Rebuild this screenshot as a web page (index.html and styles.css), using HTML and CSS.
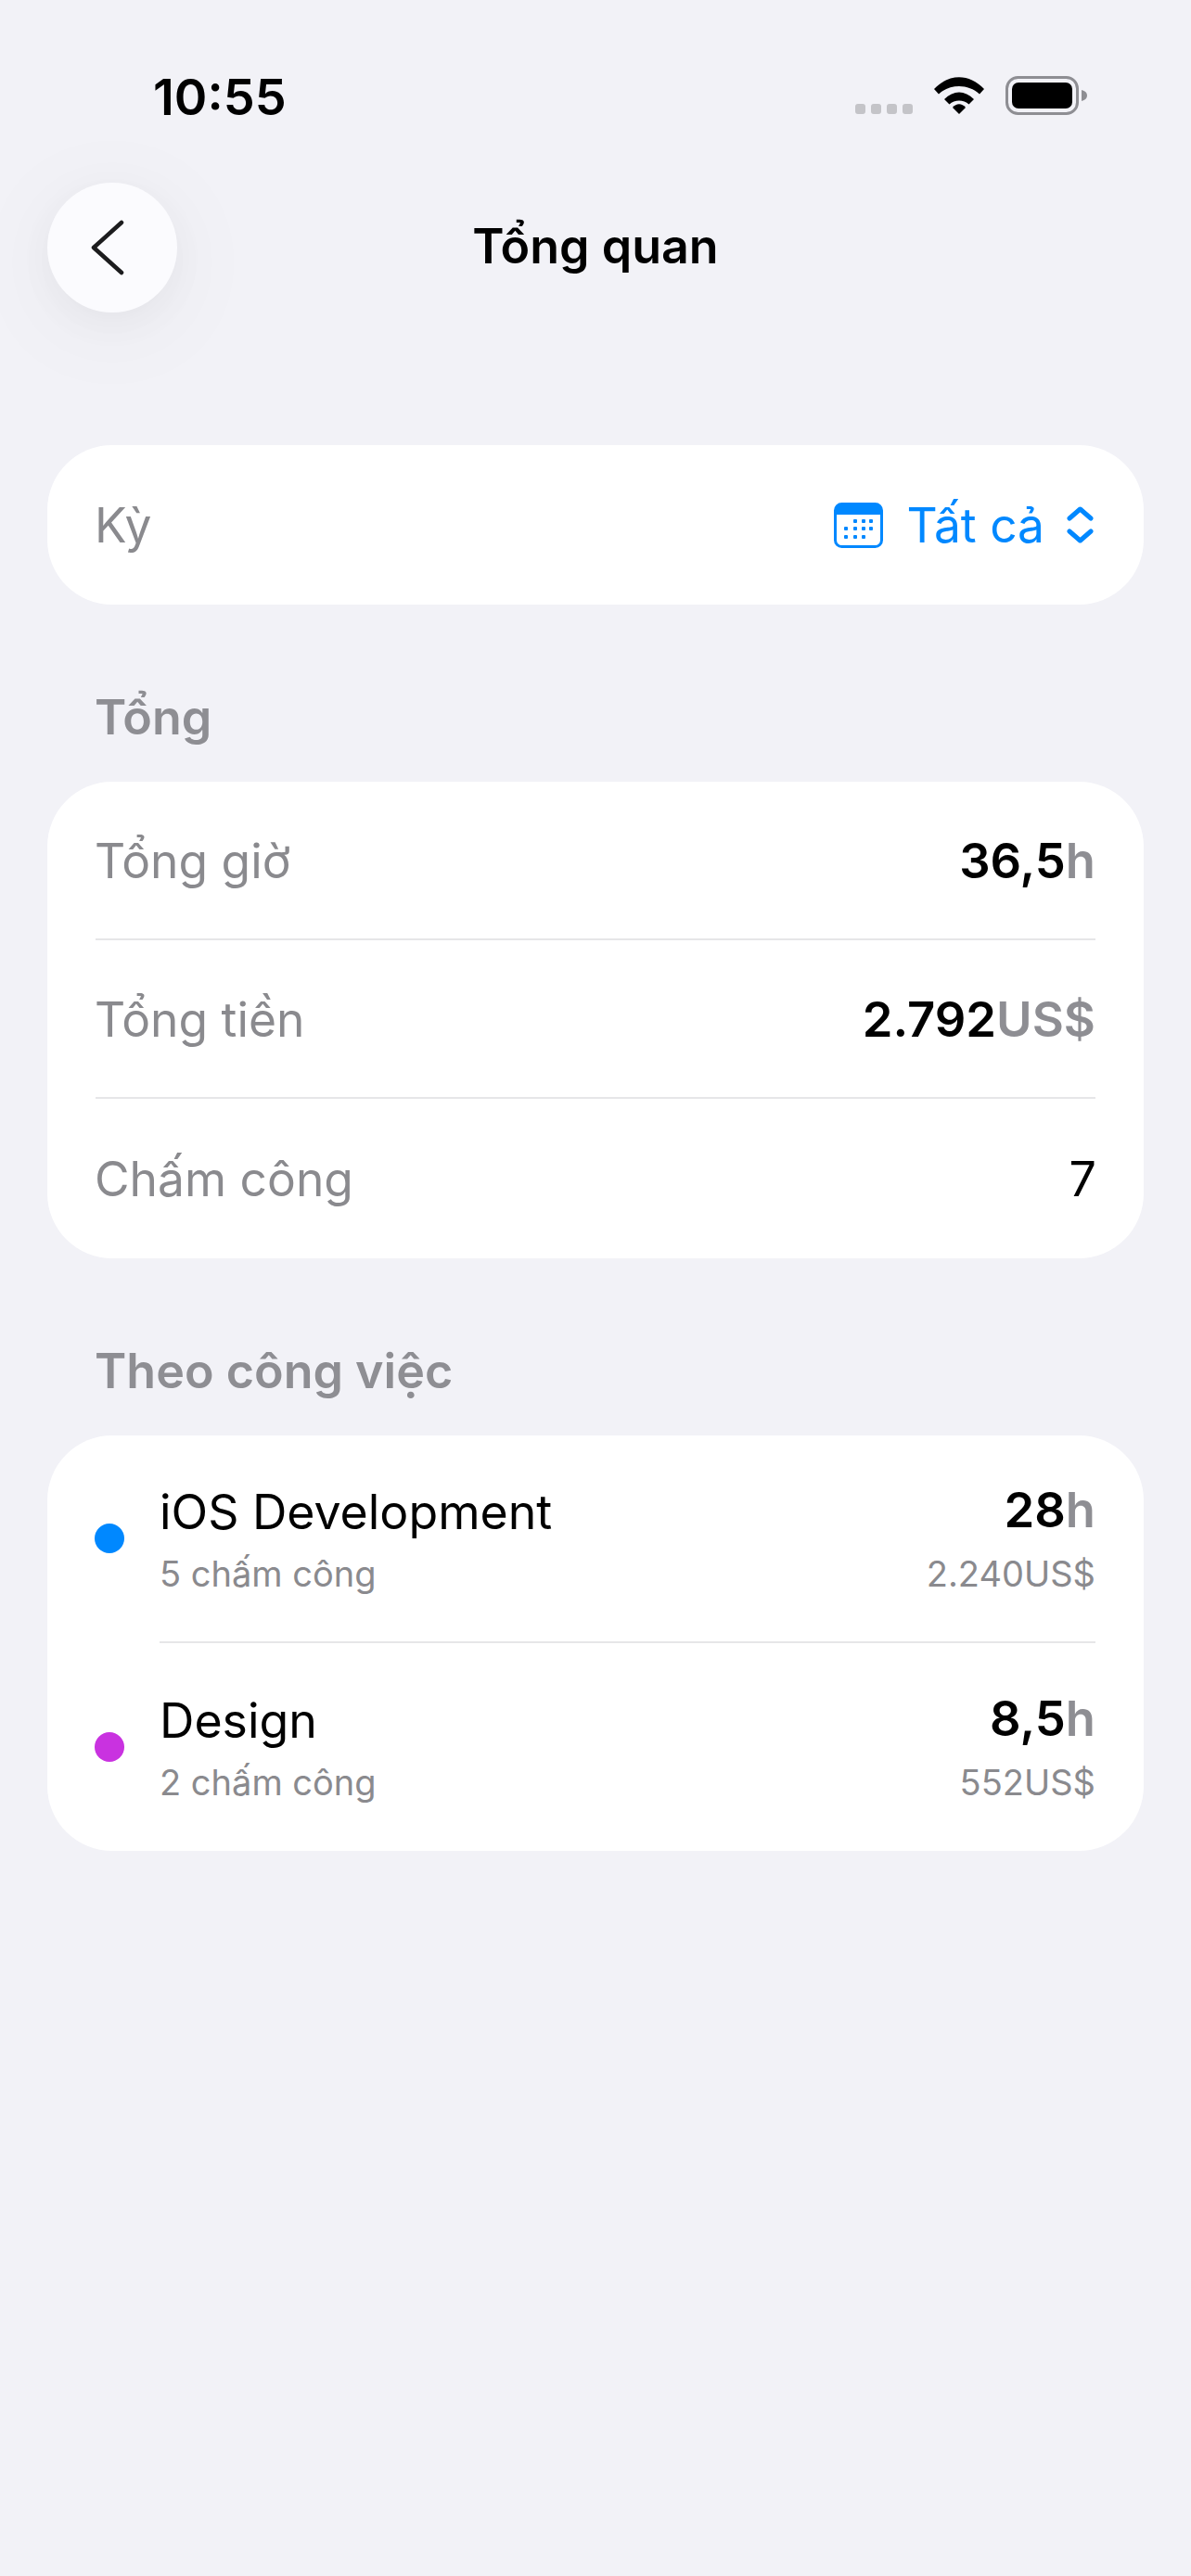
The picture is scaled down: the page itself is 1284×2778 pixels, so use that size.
FILE: index.html
```html
<!DOCTYPE html>
<html lang="vi">

<head>
	<meta charset="UTF-8">
	<title>Tổng quan</title>
	<link rel="stylesheet" href="styles.css">
</head>

<body>
	<div class="status-bar">
		<span class="time">10:55</span>
		<div class="status-icons">
			<div class="signal"><i></i><i></i><i></i><i></i></div>
			<svg class="wifi" width="54" height="40" viewBox="0 0 54 40">
				<path d="M0 13 L5 18.500 C17 7 37 7 49 18.500 L54 13 C38 -4 16 -4 0 13 Z" />
				<path d="M11 24 L16.500 29.500 C22 24 32 24 37.500 29.500 L43 24 C33 14 21 14 11 24 Z" />
				<path d="M20 33 L27 40 L34 33 C30 28 24 28 20 33 Z" />
			</svg>
			<svg class="battery" width="88" height="42" viewBox="0 0 88 42">
				<rect x="1.500" y="1.500" width="76" height="39" rx="12" fill="none" stroke="#8e8e93" stroke-width="3" />
				<rect x="7" y="7" width="65" height="28" rx="7" fill="#000" />
				<path d="M82 15 C86 16 88 18 88 21 C88 24 86 26 82 27 Z" fill="#8e8e93" />
			</svg>
		</div>
	</div>

	<div class="nav">
		<button class="back-btn">
			<svg width="36" height="60" viewBox="0 0 36 60" fill="none" stroke="#1c1c1e" stroke-width="4.500" stroke-linecap="round" stroke-linejoin="round">
				<path d="M33 3 L3 30 L33 57" />
			</svg>
		</button>
		<h1>Tổng quan</h1>
	</div>

	<div class="content">
		<div class="card">
			<div class="row">
				<span class="label">Kỳ</span>
				<div class="period">
					<svg width="53" height="49" viewBox="0 0 53 49">
						<rect x="1.500" y="1.500" width="50" height="46" rx="7" fill="#fff" stroke="#0088ff" stroke-width="3" />
						<path d="M1.500 8 a6.500 6.500 0 0 1 6.500 -6.500 h37 a6.500 6.500 0 0 1 6.500 6.500 v5 h-50 Z" fill="#0088ff" />
						<g fill="#0088ff">
							<rect x="21" y="18" width="4" height="4" rx="1" />
							<rect x="30" y="18" width="4" height="4" rx="1" />
							<rect x="38" y="18" width="4" height="4" rx="1" />
							<rect x="11" y="26" width="4" height="4" rx="1" />
							<rect x="21" y="26" width="4" height="4" rx="1" />
							<rect x="30" y="26" width="4" height="4" rx="1" />
							<rect x="38" y="26" width="4" height="4" rx="1" />
							<rect x="11" y="35" width="4" height="4" rx="1" />
							<rect x="21" y="35" width="4" height="4" rx="1" />
							<rect x="30" y="35" width="4" height="4" rx="1" />
						</g>
					</svg>
					<span class="period-text">Tất cả</span>
					<svg class="updown" width="29" height="40" viewBox="0 0 29 40" fill="none" stroke="#0088ff" stroke-width="5" stroke-linecap="round" stroke-linejoin="round">
						<path d="M3 13 L14.500 3 L26 13" />
						<path d="M3 27 L14.500 37 L26 27" />
					</svg>
				</div>
			</div>
		</div>

		<h2 class="section-title">Tổng</h2>
		<div class="card">
			<div class="row">
				<span class="label">Tổng giờ</span>
				<span class="value">36,5<span class="unit">h</span></span>
			</div>
			<div class="divider"></div>
			<div class="row">
				<span class="label">Tổng tiền</span>
				<span class="value">2.792<span class="unit">US$</span></span>
			</div>
			<div class="divider"></div>
			<div class="row">
				<span class="label">Chấm công</span>
				<span class="count">7</span>
			</div>
		</div>

		<h2 class="section-title">Theo công việc</h2>
		<div class="card">
			<div class="job">
				<span class="dot dot-blue"></span>
				<div class="job-info">
					<div class="job-name">iOS Development</div>
					<div class="job-sub">5 chấm công</div>
				</div>
				<div class="job-nums">
					<div class="value">28<span class="unit">h</span></div>
					<div class="job-sub">2.240US$</div>
				</div>
			</div>
			<div class="divider divider-job"></div>
			<div class="job">
				<span class="dot dot-purple"></span>
				<div class="job-info">
					<div class="job-name">Design</div>
					<div class="job-sub">2 chấm công</div>
				</div>
				<div class="job-nums">
					<div class="value">8,5<span class="unit">h</span></div>
					<div class="job-sub">552US$</div>
				</div>
			</div>
		</div>
	</div>
</body>

</html>
```

FILE: styles.css
```css
* {
	box-sizing: border-box;
}

body {
	margin: 0;
	min-height: 2778px;
	background-color: #f2f2f7;
	font-family: Inter, "Noto Sans", sans-serif;
	color: #000;
}

.status-bar {
	display: flex;
	justify-content: space-between;
	align-items: flex-start;
	height: 197px;
	padding: 78px 112px 0 165px;
}

.time {
	font-size: 54px;
	font-weight: 600;
	line-height: 1;
}

.status-icons {
	display: flex;
	align-items: center;
	gap: 23px;
	margin-top: 4px;
}

.signal {
	display: flex;
	gap: 6px;
	margin-top: 28px;
}

.signal i {
	width: 11px;
	height: 11px;
	border-radius: 3px;
	background-color: #c4c4c8;
}

.wifi {
	fill: #000;
}

.nav {
	display: grid;
	grid-template-columns: 140px 1fr 140px;
	align-items: center;
	padding: 0 51px;
}

.back-btn {
	display: flex;
	align-items: center;
	justify-content: center;
	width: 140px;
	height: 140px;
	padding: 0 10px 0 0;
	border: none;
	border-radius: 50%;
	background-color: #fbfbfe;
	box-shadow: 0 10px 40px rgba(0, 0, 0, 0.035), 0 16px 110px rgba(0, 0, 0, 0.05);
}

.nav h1 {
	margin: 0;
	padding-bottom: 3px;
	font-size: 52px;
	font-weight: 600;
	text-align: center;
}

.content {
	padding: 143px 51px 0;
}

.card {
	background-color: #fff;
	border-radius: 70px;
}

.row {
	display: flex;
	justify-content: space-between;
	align-items: center;
	height: 169px;
	padding: 0 51px;
}

.row:last-child {
	height: 172px;
}

.label {
	font-size: 51.500px;
	color: #8a8a8e;
}

.period {
	display: flex;
	align-items: center;
	color: #0088ff;
}

.period-text {
	margin: 0 24px 0 25px;
	font-size: 51.500px;
}

.updown {
	margin-right: 3px;
}

.section-title {
	height: 191px;
	margin: 0;
	padding: 91px 51px 0;
	font-size: 52px;
	line-height: 62px;
	font-weight: 600;
	color: #8e8e93;
}

.value {
	margin-right: 1px;
	font-size: 52.500px;
	font-weight: 600;
}

.unit {
	color: #8e8e93;
}

.count {
	font-size: 52px;
}

.divider {
	height: 2px;
	margin: 0 52px;
	background-color: #e6e6e8;
}

.divider-job {
	margin-left: 121px;
}

.job {
	display: flex;
	align-items: center;
	height: 222px;
	padding: 0 51px;
}

.job:last-child {
	height: 224px;
}

.dot {
	flex: none;
	width: 32px;
	height: 32px;
	margin-right: 38px;
	border-radius: 50%;
}

.dot-blue {
	background-color: #0088ff;
}

.dot-purple {
	background-color: #c932e0;
}

.job-info {
	flex: 1;
	padding-top: 2px;
}

.job-name {
	font-size: 51.800px;
	line-height: 62px;
}

.job-sub {
	margin-top: 12px;
	font-size: 38px;
	line-height: 48px;
	color: #8a8a8e;
}

.job-nums {
	text-align: right;
}

.job-nums .value {
	line-height: 62px;
}

.job-nums .job-sub {
	margin-top: 14px;
	margin-right: 1px;
}
```
